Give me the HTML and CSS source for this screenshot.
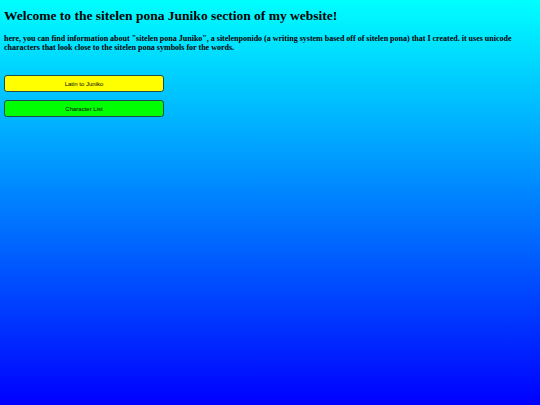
FILE: index.html
```html
<!DOCTYPE html>
<html>
<head>
<meta charset="utf-8">
<link rel="stylesheet" href="styles.css">
</head>
<body>
<h1 class="title">Welcome to the sitelen pona Juniko section of my website!</h1>
<p class="intro">here, you can find information about "sitelen pona Juniko", a sitelenponido (a writing system based off of sitelen pona) that I created. it uses unicode characters that look close to the sitelen pona symbols for the words.</p>
<div class="buttons">
  <button class="btn btn-yellow">Latin to Juniko</button>
  <button class="btn btn-green">Character List</button>
</div>
</body>
</html>
```
FILE: styles.css
```css
html {
  min-height: 100%;
  background: linear-gradient(to bottom, #00ffff, #0000ff);
}
body {
  margin: 4px;
  font-family: "Liberation Serif", "Times New Roman", serif;
  color: #000;
}
.title {
  font-size: 13.5px;
  font-weight: bold;
  margin: 4px 0 0 0;
  line-height: 16px;
}
.intro {
  font-size: 8px;
  font-weight: bold;
  line-height: 9px;
  margin: 10px 0 0 0;
}
.buttons {
  display: flex;
  flex-direction: column;
  gap: 8px;
  margin-top: 23px;
  width: 160px;
}
.btn {
  height: 17px;
  width: 160px;
  border: 1px solid #1d4d4d;
  border-radius: 3px;
  font-family: "Liberation Sans", Arial, sans-serif;
  font-size: 6px;
  color: #000;
  padding: 0;
}
.btn-yellow { background: #ffff00; }
.btn-green { background: #00ff00; }
```
